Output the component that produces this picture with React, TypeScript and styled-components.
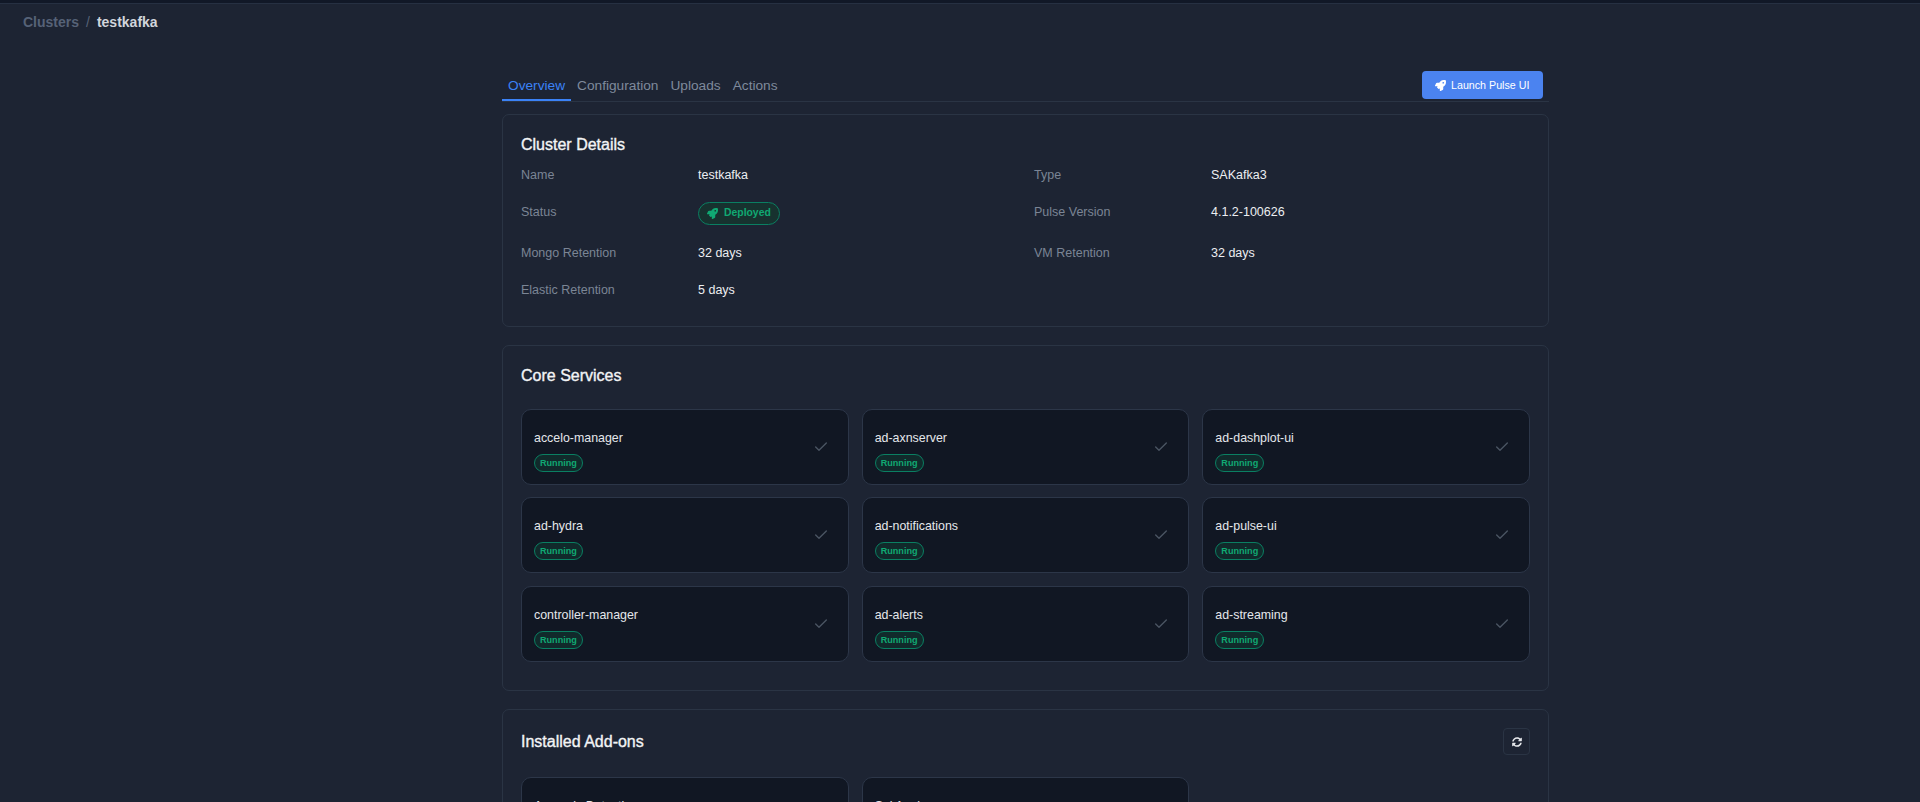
import React from 'react';
import styled, { createGlobalStyle } from 'styled-components';
import { Check } from 'lucide-react';
import { FaRocket, FaSyncAlt } from 'react-icons/fa';

const GlobalStyle = createGlobalStyle`
  html, body {
    margin: 0;
    height: 802px;
    overflow: hidden;
    background: #1d2433;
    font-family: "Liberation Sans", Arial, sans-serif;
    -webkit-font-smoothing: antialiased;
  }
`;

const Page = styled.div`
  height: 802px;
  overflow: hidden;
  border-top: 3px solid #111827;
  box-shadow: inset 0 1px 0 #263042;
  box-sizing: border-box;
`;

const Breadcrumb = styled.nav`
  display: flex;
  align-items: center;
  gap: 7px;
  height: 37px;
  padding: 0 0 0 23px;
  box-sizing: border-box;
  font-size: 14px;
  font-weight: 700;
`;

const Crumb = styled.span<{ $current?: boolean }>`
  color: ${(p) => (p.$current ? '#d1d5db' : '#566277')};
`;

const Slash = styled.span`
  color: #566277;
  font-weight: 400;
`;

const Main = styled.main`
  width: 1047px;
  margin: 29px 0 0 502px;
`;

const TabBar = styled.div`
  display: flex;
  justify-content: space-between;
  align-items: flex-end;
  height: 32px;
  border-bottom: 1px solid #2a3444;
  margin-bottom: 12px;
`;

const Tabs = styled.div`
  display: flex;
`;

const Tab = styled.div<{ $active?: boolean }>`
  padding: 0 6px;
  height: 32px;
  line-height: 34px;
  font-size: 13.7px;
  color: ${(p) => (p.$active ? '#3b82f6' : '#7f8a9c')};
  border-bottom: 2px solid ${(p) => (p.$active ? '#3b82f6' : 'transparent')};
  box-sizing: border-box;
`;

const LaunchButton = styled.button`
  display: flex;
  align-items: center;
  gap: 5px;
  height: 28px;
  width: 121px;
  margin: 0 6px 2px 0;
  padding: 0 0 0 13px;
  border: none;
  border-radius: 4px;
  background: #4b83f0;
  color: #fff;
  font-family: inherit;
  font-size: 10.7px;
  white-space: nowrap;
`;

const Panel = styled.section<{ $top?: number }>`
  border: 1px solid #2a3444;
  border-radius: 7px;
  padding: ${(p) => p.$top ?? 16}px 18px 18px;
  margin-bottom: 18px;
`;

const PanelTitle = styled.h2`
  margin: 0;
  font-size: 16px;
  line-height: 28px;
  font-weight: 400;
  -webkit-text-stroke: 0.35px currentColor;
  color: #f3f4f6;
`;

const PanelHead = styled.div<{ $gap: number }>`
  display: flex;
  align-items: center;
  justify-content: space-between;
  height: 28px;
  margin-bottom: ${(p) => p.$gap}px;
`;

const DetailGrid = styled.dl`
  display: grid;
  grid-template-columns: 177px 336px 177px 1fr;
  margin: 6px 0 8px;
  font-size: 12.5px;
`;

const Label = styled.dt<{ $h: number }>`
  color: #7b8595;
  height: ${(p) => p.$h}px;
  line-height: 20px;
`;

const Value = styled.dd<{ $h: number }>`
  margin: 0;
  color: #eceef1;
  height: ${(p) => p.$h}px;
  line-height: 20px;
`;

const DeployedBadge = styled.span`
  display: inline-flex;
  align-items: center;
  gap: 6px;
  height: 23px;
  box-sizing: border-box;
  padding: 0 8px;
  border: 1px solid #0a7f62;
  border-radius: 12px;
  background: #17322f;
  color: #10a973;
  font-size: 10.4px;
  font-weight: 700;
  line-height: 1;
  vertical-align: top;
`;

const ServiceGrid = styled.div`
  display: grid;
  grid-template-columns: repeat(3, 1fr);
  gap: 12.4px 13px;
  margin-bottom: 10px;
`;

const ServiceCard = styled.div`
  display: flex;
  align-items: center;
  justify-content: space-between;
  height: 76px;
  box-sizing: border-box;
  padding: 0 19px 0 12px;
  border: 1px solid #2c3648;
  border-radius: 10px;
  background: #111723;
`;

const ServiceText = styled.div`
  align-self: flex-start;
  padding-top: 19px;
`;

const ServiceName = styled.div`
  color: #e5e7eb;
  font-size: 12.4px;
  line-height: 18px;
  margin-bottom: 7px;
`;

const RunningBadge = styled.span`
  display: flex;
  width: fit-content;
  align-items: center;
  height: 18px;
  box-sizing: border-box;
  padding: 0 5px;
  border: 1px solid #0a7f62;
  border-radius: 9px;
  background: #112a2b;
  color: #10a973;
  font-size: 9.1px;
  font-weight: 700;
`;

const CheckMark = styled(Check)`
  color: #4b5563;
`;

const IconButton = styled.button`
  display: flex;
  align-items: center;
  justify-content: center;
  width: 27px;
  height: 27px;
  padding: 0;
  background: transparent;
  border: 1px solid #2a3444;
  border-radius: 4px;
  color: #e5e7eb;
`;

const services = [
  'accelo-manager',
  'ad-axnserver',
  'ad-dashplot-ui',
  'ad-hydra',
  'ad-notifications',
  'ad-pulse-ui',
  'controller-manager',
  'ad-alerts',
  'ad-streaming',
];

const addons = ['Anomaly Detection', 'Sql Analyzer'];

const Card = ({ name }: { name: string }) => (
  <ServiceCard>
    <ServiceText>
      <ServiceName>{name}</ServiceName>
      <RunningBadge>Running</RunningBadge>
    </ServiceText>
    <CheckMark size={16} />
  </ServiceCard>
);

export default function App() {
  return (
    <Page>
      <GlobalStyle />
      <Breadcrumb>
        <Crumb>Clusters</Crumb>
        <Slash>/</Slash>
        <Crumb $current>testkafka</Crumb>
      </Breadcrumb>
      <Main>
        <TabBar>
          <Tabs>
            <Tab $active>Overview</Tab>
            <Tab>Configuration</Tab>
            <Tab>Uploads</Tab>
            <Tab>Actions</Tab>
          </Tabs>
          <LaunchButton>
            <FaRocket size={11} />
            Launch Pulse UI
          </LaunchButton>
        </TabBar>
        <Panel>
          <PanelTitle>Cluster Details</PanelTitle>
          <DetailGrid>
            <Label $h={37}>Name</Label>
            <Value $h={37}>testkafka</Value>
            <Label $h={37}>Type</Label>
            <Value $h={37}>SAKafka3</Value>
            <Label $h={41}>Status</Label>
            <Value $h={41}>
              <DeployedBadge>
                <FaRocket size={11} />
                Deployed
              </DeployedBadge>
            </Value>
            <Label $h={41}>Pulse Version</Label>
            <Value $h={41}>4.1.2-100626</Value>
            <Label $h={37}>Mongo Retention</Label>
            <Value $h={37}>32 days</Value>
            <Label $h={37}>VM Retention</Label>
            <Value $h={37}>32 days</Value>
            <Label $h={20}>Elastic Retention</Label>
            <Value $h={20}>5 days</Value>
          </DetailGrid>
        </Panel>
        <Panel>
          <PanelHead $gap={19}>
            <PanelTitle>Core Services</PanelTitle>
          </PanelHead>
          <ServiceGrid>
            {services.map((name) => (
              <Card key={name} name={name} />
            ))}
          </ServiceGrid>
        </Panel>
        <Panel $top={18}>
          <PanelHead $gap={21}>
            <PanelTitle>Installed Add-ons</PanelTitle>
            <IconButton>
              <FaSyncAlt size={10} />
            </IconButton>
          </PanelHead>
          <ServiceGrid>
            {addons.map((name) => (
              <Card key={name} name={name} />
            ))}
          </ServiceGrid>
        </Panel>
      </Main>
    </Page>
  );
}
